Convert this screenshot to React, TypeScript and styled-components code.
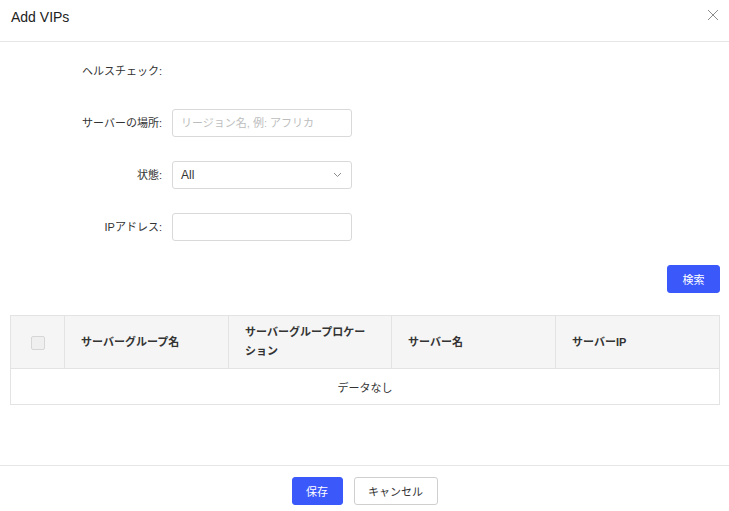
import React from "react";
import styled, { createGlobalStyle } from "styled-components";

const Global = createGlobalStyle`
  html, body { margin: 0; padding: 0; background: #fff; }
  body {
    font-family: "Liberation Sans", "Noto Sans CJK JP", sans-serif;
    color: #333;
  }
  * { box-sizing: border-box; }
`;

const Page = styled.div`
  width: 729px;
  height: 511px;
  display: flex;
  flex-direction: column;
  background: #fff;
`;

const Header = styled.div`
  height: 42px;
  flex: none;
  display: flex;
  align-items: flex-start;
  justify-content: space-between;
  padding: 9px 10px 0 11px;
  border-bottom: 1px solid #e6e6e6;
`;

const Title = styled.div`
  font-size: 14px;
  line-height: 16px;
  color: #222;
`;

const Close = styled.button`
  border: 0;
  background: none;
  padding: 0;
  width: 12px;
  height: 12px;
  display: flex;
  cursor: pointer;
`;

const Body = styled.div`
  flex: 1;
  padding: 15px 9px 0 10px;
  display: flex;
  flex-direction: column;
`;

const Form = styled.div`
  display: grid;
  grid-template-columns: 152px 180px;
  column-gap: 10px;
  row-gap: 24px;
  align-items: center;
`;

const Label = styled.label`
  font-size: 11px;
  line-height: 28px;
  text-align: right;
  color: #333;
  white-space: nowrap;
`;

const Spacer = styled.div`
  height: 28px;
`;

const Input = styled.input`
  width: 180px;
  height: 28px;
  border: 1px solid #d9d9d9;
  border-radius: 3px;
  padding: 0 8px;
  font-family: inherit;
  font-size: 11px;
  color: #333;
  outline: none;
  &::placeholder { color: #bdbdbd; }
`;

const Select = styled.div`
  width: 180px;
  height: 28px;
  border: 1px solid #d9d9d9;
  border-radius: 3px;
  padding: 0 9px 0 8px;
  display: flex;
  align-items: center;
  justify-content: space-between;
  font-size: 12px;
  color: #333;
`;

const Actions = styled.div`
  display: flex;
  justify-content: flex-end;
  margin-top: 24px;
`;

const Button = styled.button<{ $primary?: boolean; $w: number }>`
  height: 28px;
  width: ${(p) => p.$w}px;
  border-radius: 3px;
  font-family: inherit;
  font-size: 11px;
  cursor: pointer;
  border: 1px solid ${(p) => (p.$primary ? "#3b58fb" : "#cfcfcf")};
  background: ${(p) => (p.$primary ? "#3b58fb" : "#fff")};
  color: ${(p) => (p.$primary ? "#fff" : "#333")};
`;

const Table = styled.table`
  margin-top: 22px;
  width: 710px;
  border-collapse: collapse;
  table-layout: fixed;
  border: 1px solid #e3e3e3;
`;

const Th = styled.th<{ $w?: number }>`
  width: ${(p) => (p.$w ? `${p.$w}px` : "auto")};
  height: 53px;
  background: #f5f5f5;
  border: 1px solid #e3e3e3;
  padding: 0 16px;
  text-align: left;
  font-size: 11px;
  line-height: 19px;
  font-weight: 600;
  color: #333;
`;

const CheckCell = styled.th`
  width: 54px;
  background: #f5f5f5;
  border: 1px solid #e3e3e3;
  text-align: center;
  padding: 0;
`;

const Checkbox = styled.span`
  display: inline-block;
  width: 14px;
  height: 14px;
  border: 1px solid #d6d6d6;
  background: #efefef;
  border-radius: 2px;
  vertical-align: middle;
`;

const Empty = styled.td`
  height: 36px;
  text-align: center;
  font-size: 11px;
  color: #333;
`;

const Footer = styled.div`
  height: 46px;
  flex: none;
  border-top: 1px solid #e6e6e6;
  display: flex;
  justify-content: center;
  align-items: flex-start;
  padding-top: 11px;
  gap: 11px;
`;

export default function App() {
  return (
    <Page>
      <Global />
      <Header>
        <Title>Add VIPs</Title>
        <Close aria-label="close">
          <svg width="12" height="12" viewBox="0 0 12 12">
            <path d="M1 1L11 11M11 1L1 11" stroke="#8c8c8c" strokeWidth="1" fill="none" />
          </svg>
        </Close>
      </Header>
      <Body>
        <Form>
          <Label>ヘルスチェック:</Label>
          <Spacer />
          <Label>サーバーの場所:</Label>
          <Input placeholder="リージョン名, 例: アフリカ" />
          <Label>状態:</Label>
          <Select>
            <span>All</span>
            <svg width="9" height="6" viewBox="0 0 9 6">
              <path d="M1 1L4.5 4.5L8 1" stroke="#8c8c8c" strokeWidth="1" fill="none" />
            </svg>
          </Select>
          <Label>IPアドレス:</Label>
          <Input />
        </Form>
        <Actions>
          <Button $primary $w={53}>検索</Button>
        </Actions>
        <Table>
          <thead>
            <tr>
              <CheckCell><Checkbox /></CheckCell>
              <Th $w={164}>サーバーグループ名</Th>
              <Th $w={163}>サーバーグループロケーション</Th>
              <Th $w={164}>サーバー名</Th>
              <Th>サーバーIP</Th>
            </tr>
          </thead>
          <tbody>
            <tr>
              <Empty colSpan={5}>データなし</Empty>
            </tr>
          </tbody>
        </Table>
      </Body>
      <Footer>
        <Button $primary $w={51}>保存</Button>
        <Button $w={84}>キャンセル</Button>
      </Footer>
    </Page>
  );
}
